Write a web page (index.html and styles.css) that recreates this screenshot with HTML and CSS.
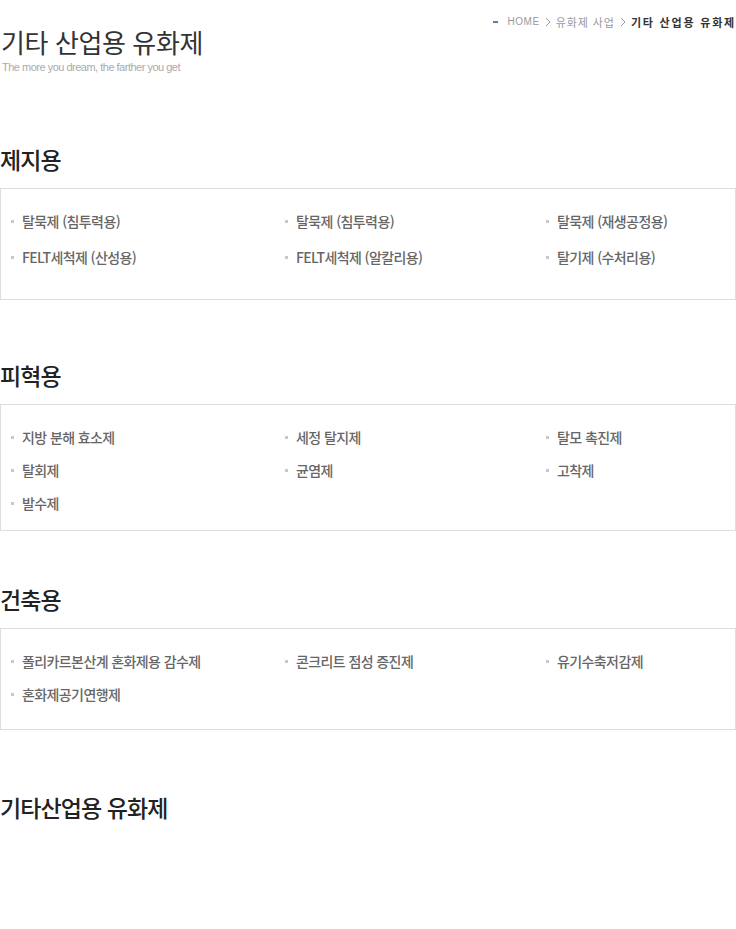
FILE: index.html
```html
<!DOCTYPE html>
<html lang="ko">
<head>
  <meta charset="UTF-8">
  <meta name="viewport" content="width=device-width, initial-scale=1.0">
  <title>기타 산업용 유화제</title>
  <link rel="stylesheet" href="styles.css">
</head>
<body>
  <div class="header">
    <div class="title-wrap">
      <h1>기타 산업용 유화제</h1>
      <p class="subtitle">The more you dream, the farther you get</p>
    </div>
    <div class="location">
      <span class="dash"></span>
      <span class="home">HOME</span>
      <svg class="arrow" width="6" height="10" viewBox="0 0 6 10"><path d="M1 1l4 4-4 4" fill="none" stroke="#999" stroke-width="1"/></svg>
      <span class="depth">유화제 사업</span>
      <svg class="arrow" width="6" height="10" viewBox="0 0 6 10"><path d="M1 1l4 4-4 4" fill="none" stroke="#999" stroke-width="1"/></svg>
      <strong>기타 산업용 유화제</strong>
    </div>
  </div>

  <div class="section first">
    <h2>제지용</h2>
    <ul class="item-box box-paper">
      <li>탈묵제 (침투력용)</li>
      <li>탈묵제 (침투력용)</li>
      <li>탈묵제 (재생공정용)</li>
      <li>FELT세척제 (산성용)</li>
      <li>FELT세척제 (알칼리용)</li>
      <li>탈기제 (수처리용)</li>
    </ul>
  </div>

  <div class="section">
    <h2>피혁용</h2>
    <ul class="item-box box-leather">
      <li>지방 분해 효소제</li>
      <li>세정 탈지제</li>
      <li>탈모 촉진제</li>
      <li>탈회제</li>
      <li>균염제</li>
      <li>고착제</li>
      <li>발수제</li>
    </ul>
  </div>

  <div class="section tight">
    <h2>건축용</h2>
    <ul class="item-box box-build">
      <li>폴리카르본산계 혼화제용 감수제</li>
      <li>콘크리트 점성 증진제</li>
      <li>유기수축저감제</li>
      <li>혼화제공기연행제</li>
    </ul>
  </div>

  <div class="section last">
    <h2>기타산업용 유화제</h2>
  </div>
</body>
</html>
```

FILE: styles.css
```css
body {
  margin: 0;
  font-family: "Noto Sans CJK KR", "Noto Sans", sans-serif;
  background: #fff;
  color: #333;
  height: 929px;
}
.header {
  display: flex;
  justify-content: space-between;
  align-items: flex-start;
}
.title-wrap {
  padding-top: 27px;
}
h1 {
  margin: 0;
  font-size: 26px;
  line-height: 30px;
  font-weight: 400;
  letter-spacing: -0.4px;
  color: #333;
  padding-left: 1px;
}
.subtitle {
  margin: 3px 0 0 2px;
  font-family: "Liberation Sans", sans-serif;
  font-size: 11px;
  line-height: 14px;
  letter-spacing: -0.5px;
  color: #aaa;
}
.location {
  display: flex;
  align-items: center;
  gap: 5px;
  padding-top: 14px;
  font-size: 11px;
  line-height: 16px;
  color: #999;
  white-space: nowrap;
}
.location .dash {
  width: 5px;
  height: 2px;
  background: #5b7fb0;
  margin-right: 4px;
}
.location .home {
  font-family: "Liberation Sans", sans-serif;
  font-size: 10px;
  letter-spacing: 0.6px;
}
.location .depth {
  letter-spacing: 0.9px;
}
.location strong {
  color: #333;
  font-weight: 700;
  letter-spacing: 1.8px;
}
.section {
  margin-top: 60px;
}
.section.first {
  margin-top: 70px;
}
.section.tight {
  margin-top: 53px;
}
.section.last {
  margin-top: 62px;
}
h2 {
  margin: 0 0 14px;
  font-size: 23px;
  line-height: 30px;
  font-weight: 500;
  letter-spacing: -0.9px;
  color: #222;
}
.item-box {
  list-style: none;
  margin: 0;
  border: 1px solid #ddd;
  padding: 16px 0 10px 10px;
  display: grid;
  grid-template-columns: 274px 261px 1fr;
}
.item-box li {
  display: flex;
  align-items: center;
  gap: 8px;
  font-size: 14px;
  line-height: 33px;
  font-weight: 500;
  letter-spacing: -0.6px;
  color: #666;
}
.item-box li::before {
  content: "";
  width: 3px;
  height: 3px;
  background: #c8c8c8;
  flex-shrink: 0;
}
.box-paper {
  padding-top: 14px;
  padding-bottom: 24px;
}
.box-paper li {
  line-height: 36px;
}
.box-leather {
  padding-bottom: 10px;
}
.box-build {
  padding-bottom: 18px;
}
```
